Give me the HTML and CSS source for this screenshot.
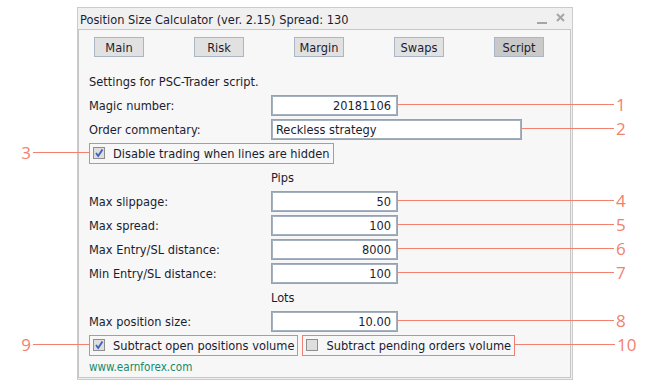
FILE: index.html
```html
<!DOCTYPE html>
<html lang="en">
<head>
  <meta charset="UTF-8">
  <title>Position Size Calculator - Script</title>
  <link rel="stylesheet" href="styles.css">
</head>
<body>
  <div class="window">
    <div class="titlebar">
      <span class="title">Position Size Calculator (ver. 2.15) Spread: 130</span>
      <span class="controls">
        <svg class="min" width="10" height="10" viewBox="0 0 10 10"><rect x="0" y="7" width="10" height="2" fill="#a6a6a6"/></svg>
        <svg class="close" width="9" height="9" viewBox="0 0 9 9"><path d="M1 1 L8 8 M8 1 L1 8" stroke="#a6a6a6" stroke-width="2"/></svg>
      </span>
    </div>

    <div class="panel">
      <!-- Tabs -->
      <div class="tabs">
        <button class="tab">Main</button>
        <button class="tab">Risk</button>
        <button class="tab">Margin</button>
        <button class="tab">Swaps</button>
        <button class="tab active">Script</button>
      </div>

      <div class="row"><span class="text">Settings for PSC-Trader script.</span></div>

      <div class="row">
        <span class="label">Magic number:</span>
        <div class="field num">20181106<span class="callout right c-long"><i></i>1</span></div>
      </div>

      <div class="row">
        <span class="label">Order commentary:</span>
        <div class="field wide">Reckless strategy<span class="callout right c-short"><i></i>2</span></div>
      </div>

      <div class="row">
        <label class="check"><span class="callout left">3<i></i></span>
          <svg class="box" width="12" height="12" viewBox="0 0 12 12"><rect x="0.5" y="0.5" width="11" height="11" fill="#dedede" stroke="#8e8e8e"/><path d="M3 6 L5.2 9 L9.5 2.5" stroke="#3d5cbf" stroke-width="1.8" fill="none"/></svg>
          Disable trading when lines are hidden</label>
      </div>

      <div class="row"><span class="heading">Pips</span></div>

      <div class="row">
        <span class="label">Max slippage:</span>
        <div class="field num">50<span class="callout right c-long"><i></i>4</span></div>
      </div>
      <div class="row">
        <span class="label">Max spread:</span>
        <div class="field num">100<span class="callout right c-long"><i></i>5</span></div>
      </div>
      <div class="row">
        <span class="label">Max Entry/SL distance:</span>
        <div class="field num">8000<span class="callout right c-long"><i></i>6</span></div>
      </div>
      <div class="row">
        <span class="label">Min Entry/SL distance:</span>
        <div class="field num">100<span class="callout right c-long"><i></i>7</span></div>
      </div>

      <div class="row"><span class="heading">Lots</span></div>

      <div class="row">
        <span class="label">Max position size:</span>
        <div class="field num">10.00<span class="callout right c-long"><i></i>8</span></div>
      </div>

      <div class="row checks">
        <label class="check"><span class="callout left">9<i></i></span>
          <svg class="box" width="12" height="12" viewBox="0 0 12 12"><rect x="0.5" y="0.5" width="11" height="11" fill="#dedede" stroke="#8e8e8e"/><path d="M3 6 L5.2 9 L9.5 2.5" stroke="#3d5cbf" stroke-width="1.8" fill="none"/></svg>
          Subtract open positions volume</label>
        <label class="check"><span class="callout right c-mid"><i></i>10</span>
          <svg class="box" width="12" height="12" viewBox="0 0 12 12"><rect x="0.5" y="0.5" width="11" height="11" fill="#dedede" stroke="#8e8e8e"/></svg>
          Subtract pending orders volume</label>
      </div>

      <div class="footer">www.earnforex.com</div>
    </div>
  </div>
</body>
</html>
```

FILE: styles.css
```css
/* General */
body {
  margin: 0;
  padding: 7px 0 0 77px;
  background-color: #fff;
  font-family: "DejaVu Sans Condensed", "DejaVu Sans", sans-serif;
  font-size: 12.7px;
  color: #1c1c30;
}

/* Window */
.window {
  width: 494px;
  height: 371px;
  border: 1px solid #cbcbcb;
  background-color: #f0f0f0;
}

.titlebar {
  height: 21px;
  display: flex;
  align-items: center;
  padding-left: 2px;
}

.title {
  flex: 1;
  padding-top: 1px;
}

.controls {
  display: flex;
  align-items: center;
  gap: 9px;
  padding-right: 7px;
}

.controls .min { margin-top: 3px; }
.controls .close { margin-top: -3px; }

/* Main panel */
.panel {
  margin: 0 1px 1px 0;
  border: 1px solid #c6c6c6;
  background-color: #f7f7f7;
  padding-left: 10px;
  height: 347px;
}

/* Tabs */
.tabs {
  display: flex;
  gap: 50px;
  padding: 7px 0 0 5px;
  margin-bottom: 12px;
}

.tab {
  width: 50px;
  height: 20px;
  padding: 0;
  font: inherit;
  color: inherit;
  background-color: #e1e1e1;
  border: 1px solid #aab6c4;
  border-radius: 0;
}

.tab.active {
  background-color: #c9c9c9;
}

/* Rows */
.row {
  height: 24px;
  display: flex;
  align-items: center;
}

.label {
  width: 182px;
}

.heading {
  padding-left: 182px;
}

/* Inputs */
.field {
  position: relative;
  width: 127px;
  height: 21px;
  box-sizing: border-box;
  border: 1px solid #f28072;
  box-shadow: inset 0 0 0 1px #a6b1c0;
  background-color: #fff;
  display: flex;
  align-items: center;
  padding: 0 4px;
}

.field.num {
  justify-content: flex-end;
  padding-right: 6px;
}

.field.wide {
  width: 251px;
}

/* Checkboxes */
.checks {
  gap: 4px;
}

.check {
  position: relative;
  height: 21px;
  box-sizing: border-box;
  border: 1px solid #f28072;
  display: inline-flex;
  align-items: center;
  gap: 8px;
  padding: 0 3px 0 3px;
}

.box {
  flex: none;
}

/* Callouts */
.callout {
  position: absolute;
  top: 50%;
  display: flex;
  align-items: center;
  height: 20px;
  margin-top: -11px;
  font-family: "Open Sans", sans-serif;
  font-size: 17px;
  color: #f4806f;
}

.callout i {
  display: block;
  height: 1px;
  background-color: #f4806f;
}

.callout.right {
  left: 100%;
}

.callout.right i {
  margin-right: 2px;
}

.callout.left {
  right: 100%;
  margin-right: 1px;
}

.callout.left i {
  width: 56px;
  margin-left: 2px;
}

.c-long i { width: 217px; }
.c-short i { width: 93px; }
.c-mid i { width: 101px; }

/* Footer link */
.footer {
  height: 20px;
  line-height: 20px;
  color: #158a6c;
  font-size: 11.6px;
}
```
